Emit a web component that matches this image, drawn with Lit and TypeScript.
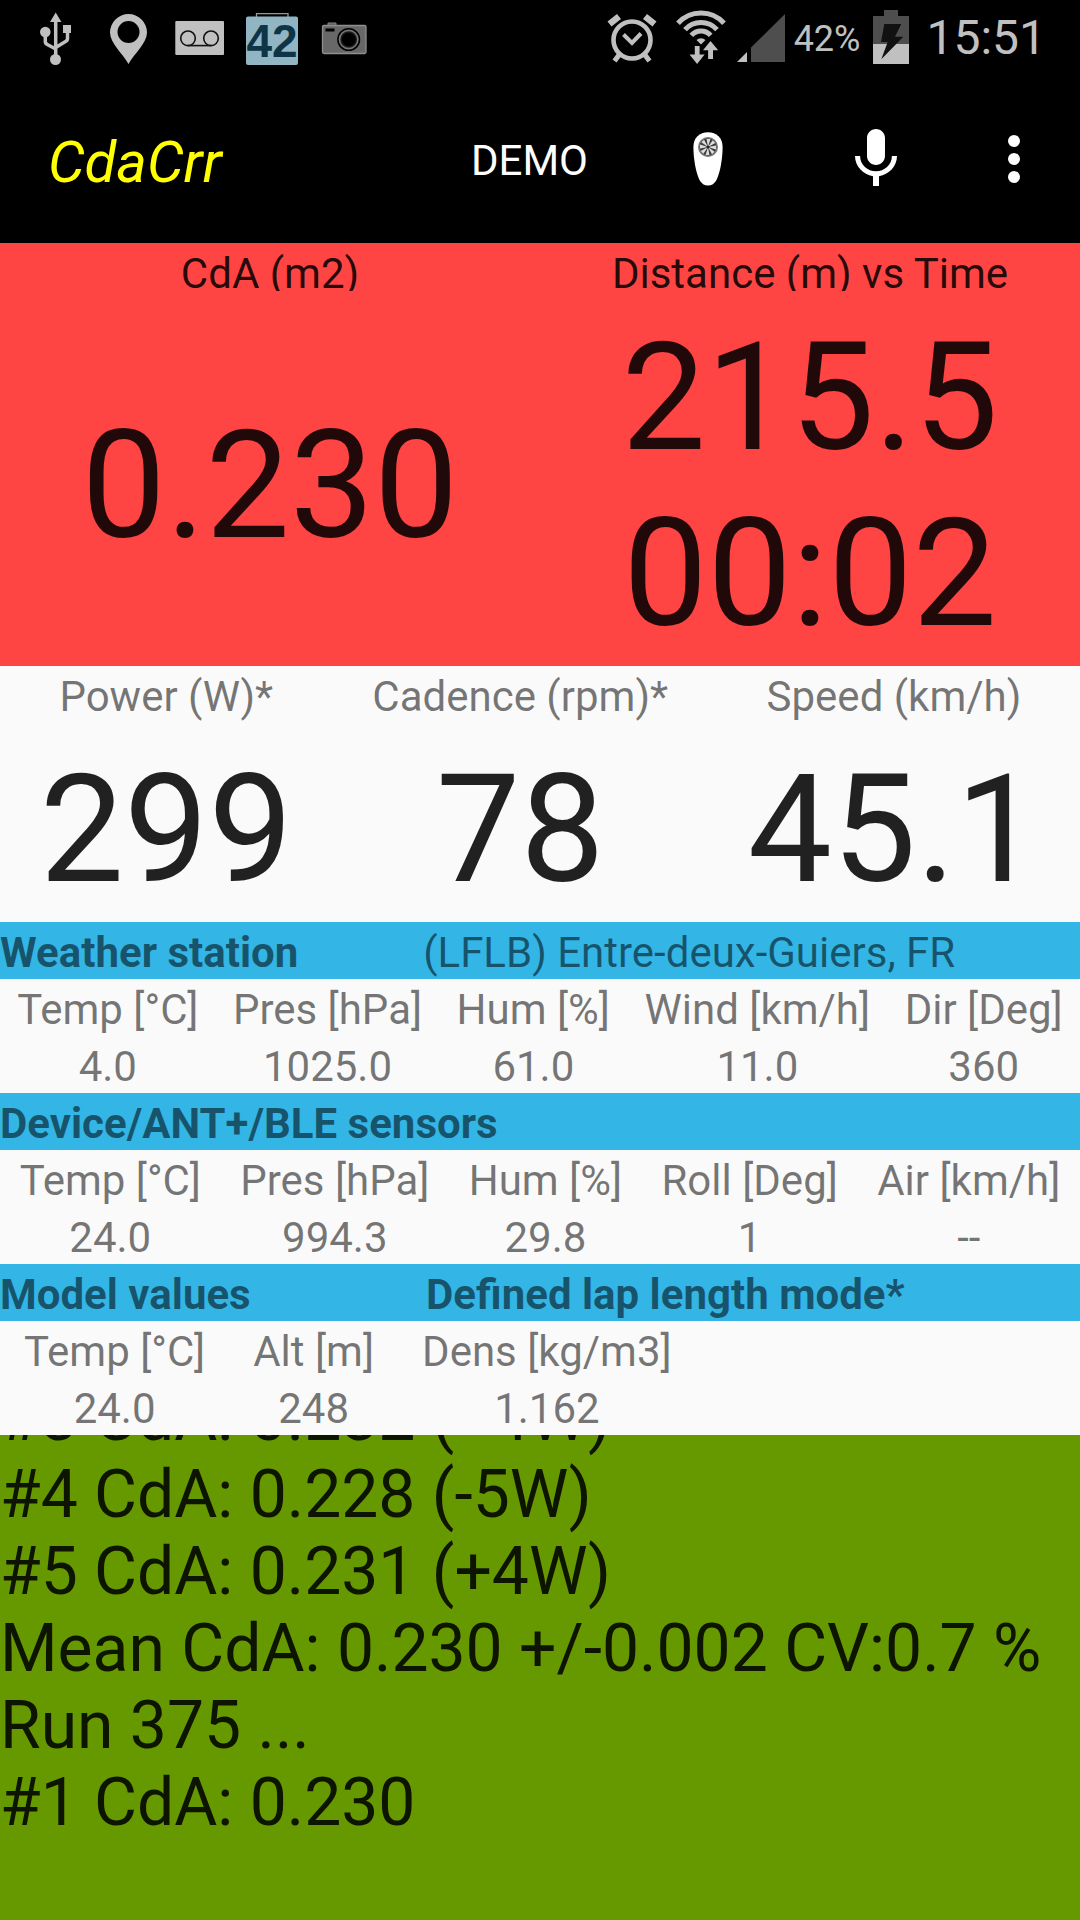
import { LitElement, html, css, svg } from "lit";
import { customElement, property } from "lit/decorators.js";

interface Reading {
  name: string;
  value: string;
}

const WEATHER: Reading[] = [
  { name: "Temp [°C]", value: "4.0" },
  { name: "Pres [hPa]", value: "1025.0" },
  { name: "Hum [%]", value: "61.0" },
  { name: "Wind [km/h]", value: "11.0" },
  { name: "Dir [Deg]", value: "360" },
];

const SENSORS: Reading[] = [
  { name: "Temp [°C]", value: "24.0" },
  { name: "Pres [hPa]", value: "994.3" },
  { name: "Hum [%]", value: "29.8" },
  { name: "Roll [Deg]", value: "1" },
  { name: "Air [km/h]", value: "--" },
];

const MODEL: Reading[] = [
  { name: "Temp [°C]", value: "24.0" },
  { name: "Alt [m]", value: "248" },
  { name: "Dens [kg/m3]", value: "1.162" },
];

const EFFORT: Reading[] = [
  { name: "Power (W)*", value: "299" },
  { name: "Cadence (rpm)*", value: "78" },
  { name: "Speed (km/h)", value: "45.1" },
];

const LOG = [
  "#3 CdA: 0.232 (+4W)",
  "#4 CdA: 0.228 (-5W)",
  "#5 CdA: 0.231 (+4W)",
  "Mean CdA: 0.230 +/-0.002 CV:0.7 %",
  "Run 375 ...",
  "#1 CdA: 0.230",
];

@customElement("status-bar")
export class StatusBar extends LitElement {
  static styles = css`
    :host {
      display: flex;
      justify-content: space-between;
      height: 75px;
      padding: 0 34px 0 20px;
      background: #000;
      color: #c0c0c0;
      overflow: hidden;
    }
    .group {
      display: flex;
      align-items: center;
    }
    svg {
      display: block;
      height: 75px;
      flex: none;
    }
    .battery {
      font-size: 36px;
      line-height: 48px;
      padding: 2px 12px 0 8px;
    }
    .clock {
      font-size: 48px;
      line-height: 60px;
      padding-left: 16px;
    }
    .badge {
      font: bold 46px "Liberation Sans", sans-serif;
    }
  `;

  render() {
    return html`
      <div class="group">
        <svg width="72" viewBox="20 0 72 75" aria-hidden="true">
          <g fill="#c0c0c0">
            <path d="M55.7 12.5 61.4 22H50z" />
            <circle cx="45.3" cy="32" r="5.3" />
            <path d="M63 25h8v8h-8z" />
            <circle cx="55.5" cy="59.5" r="5.5" />
          </g>
          <path d="M55.7 20v36M45.3 34v7.500q0 2 2 3l8.400 4.500M67.500 32v6.500q0 2-2 3l-9.800 6" fill="none" stroke="#c0c0c0" stroke-width="3.500" />
        </svg>
        <svg width="72" viewBox="92 0 72 75" aria-hidden="true">
          <path fill="#c0c0c0" fill-rule="evenodd" d="M128.500 64C123 54 110 43 110 32.500a18.500 18.500 0 0 1 37 0C147 43 134 54 128.500 64zM128.500 21a11 11 0 1 0 0 22 11 11 0 0 0 0-22z" />
        </svg>
        <svg width="72" viewBox="164 0 72 75" aria-hidden="true">
          <rect x="175.300" y="21" width="48.700" height="34" rx="1" fill="#c0c0c0" />
          <g fill="none" stroke="#111" stroke-width="1.600">
            <circle cx="188" cy="38.300" r="7.300" />
            <circle cx="211" cy="38.300" r="7.300" />
            <path d="M188 45.600h23" />
          </g>
        </svg>
        <svg width="72" viewBox="236 0 72 75" aria-hidden="true">
          <path d="M256.500 17v-3.300h31.500V17" fill="none" stroke="#8c9a9f" stroke-width="1.300" />
          <rect x="246" y="16.500" width="52" height="48.500" rx="2" fill="#92b5c3" />
          <text class="badge" x="272" y="57" text-anchor="middle" fill="#0d3547">42</text>
        </svg>
        <svg width="72" viewBox="308 0 72 75" aria-hidden="true">
          <path d="M328 25.500v-2.500h8v2.500" fill="#555" stroke="#8a8a8a" />
          <rect x="322.500" y="25.500" width="43.500" height="28" rx="1.500" fill="#686868" stroke="#8f8f8f" stroke-width="1.300" />
          <rect x="325.500" y="28.500" width="9" height="3" fill="#000" />
          <circle cx="348.700" cy="39.500" r="10.800" fill="#777" stroke="#000" stroke-width="1.500" />
          <circle cx="348.700" cy="39.500" r="7.600" fill="#000" stroke="#1b1b1b" stroke-width="1.500" />
        </svg>
      </div>
      <div class="group">
        <svg width="70" viewBox="595 0 70 75" aria-hidden="true">
          <g fill="none" stroke="#c0c0c0">
            <circle cx="631" cy="40" r="18.500" stroke-width="4.600" />
            <path d="m622.500 34.500 8.500 8.500 9-9.500" stroke-width="4" />
            <path d="m618 55-4.500 6M644 55l4.500 6" stroke-width="5" />
            <path d="m608.500 24 9.500-7.500M653.500 24l-9.500-7.500" stroke-width="6.500" />
          </g>
        </svg>
        <svg width="70" viewBox="665 0 70 75" aria-hidden="true">
          <g fill="none" stroke="#c0c0c0" stroke-width="5">
            <path d="M677 23.200a31 31 0 0 1 46 0" />
            <path d="M684 29.600a21.500 21.500 0 0 1 32 0" />
            <path d="M690.300 35.300a13 13 0 0 1 19.400 0" />
          </g>
          <path fill="#c0c0c0" d="M695.500 40a6.500 6.500 0 0 1 9 0l-4.500 4.500zM693.800 46h4.800v8.500h5l-7.500 9.500-7.600-9.500h5.300zM709.500 41l7.700 9.300h-5.200V59h-4.900v-8.700H702z" />
        </svg>
        <svg width="50" viewBox="735 0 50 75" aria-hidden="true">
          <path fill="#4e4e4e" d="M750 47.600 784 14v48h-34z" />
          <path fill="#c0c0c0" d="M736 62l10-10v10z" />
        </svg>
        <span class="battery">42%</span>
        <svg width="38" viewBox="873 0 38 75" aria-hidden="true">
          <path fill="#4e4e4e" d="M885 10h14v6h11v28h-36V16h11z" />
          <path fill="#c0c0c0" d="M874 44h36v20h-36z" />
          <path fill="#111" d="M885.300 24h17l-6.300 12.700h8.300l-22 22.600 6.400-17.300H882z" />
        </svg>
        <time class="clock">15:51</time>
      </div>
    `;
  }
}

@customElement("app-bar")
export class AppBar extends LitElement {
  static styles = css`
    :host {
      display: flex;
      align-items: center;
      justify-content: space-between;
      height: 168px;
      padding-left: 48px;
      background: #000;
      color: #fff;
    }
    .title {
      margin: 0;
      padding-top: 6px;
      font-size: 58px;
      line-height: 70px;
      font-weight: 400;
      font-style: italic;
      color: #ff0;
    }
    .actions {
      display: flex;
      align-items: center;
    }
    .action {
      appearance: none;
      border: 0;
      margin: 0;
      padding: 0 48px;
      background: none;
      color: inherit;
      font: inherit;
      font-size: 42px;
      line-height: 72px;
      display: block;
    }
    .text {
      padding: 4px 36px 0;
    }
    .overflow {
      padding: 0 30px 0 18px;
    }
    svg {
      display: block;
      width: 72px;
      height: 72px;
    }
  `;

  render() {
    const blades = [0, 45, 90, 135, 180, 225, 270, 315].map(
      (angle) => svg`<path d="M36 24 34.600 16h3.800z" fill="#ddd" transform="rotate(${angle} 36 24)" />`
    );
    return html`
      <h1 class="title">CdaCrr</h1>
      <div class="actions">
        <button class="action text">DEMO</button>
        <button class="action" aria-label="Sensor">
          <svg viewBox="0 0 72 72">
            <path fill="#fff" d="M36 9.300C44.500 9.300 50.600 15 50.600 24 50.600 36 48 50 44.500 57q-3 5.500-8.500 5.500T27.500 57C24 50 21.400 36 21.400 24 21.400 15 27.500 9.300 36 9.300z" />
            <circle cx="36" cy="24" r="9.200" fill="#3c3c3c" stroke="#777" stroke-width="1.600" />
            ${blades}
            <circle cx="36" cy="24" r="1.600" fill="#222" />
          </svg>
        </button>
        <button class="action" aria-label="Voice">
          <svg viewBox="0 0 24 24" fill="#fff">
            <path d="M12 14c1.660 0 2.990-1.340 2.990-3L15 5c0-1.660-1.340-3-3-3S9 3.340 9 5v6c0 1.660 1.340 3 3 3zm5.300-3c0 3-2.540 5.100-5.300 5.100S6.700 14 6.700 11H5c0 3.410 2.720 6.230 6 6.720V21h2v-3.280c3.280-.480 6-3.300 6-6.720h-1.700z" />
          </svg>
        </button>
        <button class="action overflow" aria-label="More options">
          <svg viewBox="0 0 24 24" fill="#fff">
            <circle cx="12" cy="6" r="2" />
            <circle cx="12" cy="12" r="2" />
            <circle cx="12" cy="18" r="2" />
          </svg>
        </button>
      </div>
    `;
  }
}

@customElement("reading-table")
export class ReadingTable extends LitElement {
  @property({ attribute: false }) heading = "";
  @property({ attribute: false }) note = "";
  @property({ type: Boolean }) strong = false;
  @property({ type: Boolean }) packed = false;
  @property({ attribute: false }) readings: Reading[] = [];

  static styles = css`
    :host {
      display: block;
      font-size: 42px;
      line-height: 49px;
      color: rgba(0, 0, 0, 0.54);
      white-space: nowrap;
    }
    .band {
      display: grid;
      grid-template-columns: auto auto;
      background: #33b5e5;
    }
    .heading,
    .note,
    .cell {
      margin: 0;
      padding: 6px 0 2px;
      font-size: 42px;
      font-weight: 400;
    }
    .heading,
    .bold {
      font-weight: 700;
    }
    .table {
      display: grid;
      text-align: center;
    }
    .part,
    .row {
      display: contents;
    }
    .head {
      grid-row: 1;
    }
    .value {
      grid-row: 2;
    }
    .packed {
      justify-content: start;
    }
    .packed .cell {
      padding-left: 24px;
      padding-right: 24px;
    }
  `;

  render() {
    return html`
      <div class="band">
        <h2 class="heading">${this.heading}</h2>
        ${this.note
          ? html`<p class="note ${this.strong ? "bold" : ""}">${this.note}</p>`
          : null}
      </div>
      <table class="table ${this.packed ? "packed" : ""}" aria-label=${this.heading}>
        <thead class="part">
          <tr class="row">
            ${this.readings.map((r) => html`<th class="cell head" scope="col">${r.name}</th>`)}
          </tr>
        </thead>
        <tbody class="part">
          <tr class="row">
            ${this.readings.map((r) => html`<td class="cell value">${r.value}</td>`)}
          </tr>
        </tbody>
      </table>
    `;
  }
}

@customElement("app-root")
export class AppRoot extends LitElement {
  static styles = css`
    :host {
      display: flex;
      flex-direction: column;
      height: 100vh;
      overflow: hidden;
      background: #fafafa;
      font-family: Roboto, sans-serif;
      color: rgba(0, 0, 0, 0.87);
    }
    .lap {
      display: grid;
      grid-template-columns: 1fr 1fr;
      background: #ff4444;
      text-align: center;
    }
    .effort {
      display: grid;
      grid-template-columns: auto auto auto;
      text-align: center;
    }
    .metric {
      display: flex;
      flex-direction: column;
    }
    .label {
      margin: 0;
      padding: 6px 0 2px;
      font-size: 42px;
      line-height: 49px;
      font-weight: 400;
      white-space: nowrap;
    }
    .lap .label {
      padding: 6px 0 0;
      height: 42px;
      overflow: hidden;
    }
    .effort .label {
      color: rgba(0, 0, 0, 0.54);
    }
    .figures {
      flex: 1;
      display: flex;
      flex-direction: column;
      justify-content: center;
      padding: 19px 0 4px;
      font-size: 150px;
      line-height: 176px;
    }
    .log {
      flex: 1;
      min-height: 0;
      display: flex;
      flex-direction: column;
      justify-content: flex-end;
      overflow: hidden;
      padding-bottom: 79px;
      background: #669900;
      font-size: 66px;
      line-height: 77px;
      white-space: nowrap;
    }
    .line {
      flex: none;
    }
  `;

  render() {
    return html`
      <status-bar></status-bar>
      <app-bar></app-bar>
      <section class="lap">
        <div class="metric">
          <h2 class="label">CdA (m2)</h2>
          <div class="figures"><span>0.230</span></div>
        </div>
        <div class="metric">
          <h2 class="label">Distance (m) vs Time</h2>
          <div class="figures"><span>215.5</span><span>00:02</span></div>
        </div>
      </section>
      <section class="effort">
        ${EFFORT.map(
          (m) => html`
            <div class="metric">
              <h2 class="label">${m.name}</h2>
              <div class="figures">${m.value}</div>
            </div>
          `
        )}
      </section>
      <reading-table
        .heading=${"Weather station"}
        .note=${"(LFLB) Entre-deux-Guiers, FR"}
        .readings=${WEATHER}
      ></reading-table>
      <reading-table .heading=${"Device/ANT+/BLE sensors"} .readings=${SENSORS}></reading-table>
      <reading-table
        .heading=${"Model values"}
        .note=${"Defined lap length mode*"}
        strong
        packed
        .readings=${MODEL}
      ></reading-table>
      <div class="log" role="log">
        ${LOG.map((line) => html`<div class="line">${line}</div>`)}
      </div>
    `;
  }
}
